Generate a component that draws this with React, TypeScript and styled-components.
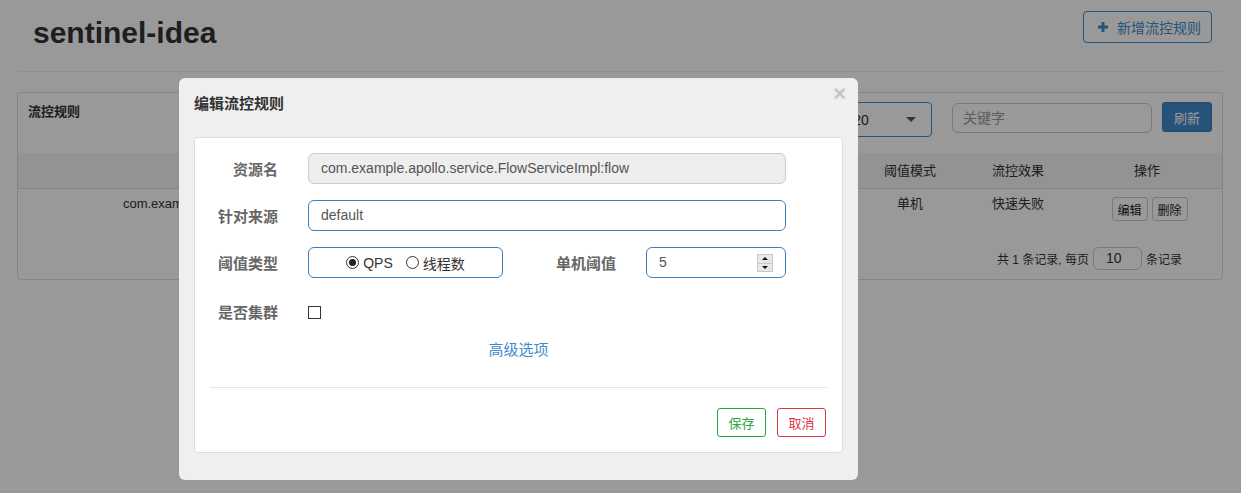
import styled, { createGlobalStyle } from "styled-components";

const GlobalStyle = createGlobalStyle`
  * {
    box-sizing: border-box;
  }
  html, body {
    margin: 0;
    padding: 0;
    background: #ffffff;
  }
  body {
    font-family: "Liberation Sans", "Noto Sans CJK SC", sans-serif;
    font-size: 14px;
    color: #333;
  }
`;

const blue = "#428bca";

const Page = styled.div`
  padding: 0 18px 0 17px;
  height: 493px;
`;

const Header = styled.div`
  display: flex;
  justify-content: space-between;
  align-items: flex-start;
  height: 71px;
  padding: 11px 11px 0 16px;
`;

const Title = styled.h1`
  margin: 5px 0 0;
  font-size: 30px;
  line-height: 34px;
  font-weight: bold;
  color: #333;
`;

const OutlineButton = styled.button`
  display: flex;
  align-items: center;
  gap: 9px;
  width: 129px;
  height: 32px;
  padding: 0 0 0 14px;
  border: 1px solid ${blue};
  border-radius: 4px;
  background: #fff;
  color: ${blue};
  font-family: inherit;
  font-size: 14px;
`;

const Divider = styled.div`
  height: 1px;
  background: #eee;
`;

const Panel = styled.div`
  margin-top: 20px;
  border: 1px solid #ddd;
  border-radius: 4px;
  background: #fff;
`;

const PanelHeading = styled.div`
  display: flex;
  justify-content: space-between;
  align-items: flex-start;
  height: 60px;
  padding: 9px 10px 0 10px;
`;

const PanelTitle = styled.div`
  font-size: 13px;
  line-height: 20px;
  font-weight: bold;
  color: #333;
`;

const Toolbar = styled.div`
  display: flex;
  align-items: flex-start;
`;

const MachineSelect = styled.div`
  display: flex;
  align-items: center;
  justify-content: space-between;
  width: 193px;
  height: 35px;
  padding: 0 15px 0 12px;
  border: 1px solid ${blue};
  border-radius: 4px;
  font-size: 14px;
  color: #333;
`;

const Caret = styled.span`
  width: 0;
  height: 0;
  border-left: 5px solid transparent;
  border-right: 5px solid transparent;
  border-top: 5px solid #555;
`;

const SearchInput = styled.div`
  width: 200px;
  height: 30px;
  margin: 1px 0 0 20px;
  padding: 0 10px;
  border: 1px solid #ccc;
  border-radius: 6px;
  font-size: 14px;
  line-height: 28px;
  color: #999;
`;

const PrimaryButton = styled.button`
  width: 50px;
  height: 30px;
  margin-left: 10px;
  border: 1px solid #357ebd;
  border-radius: 3px;
  background: ${blue};
  color: #fff;
  font-family: inherit;
  font-size: 13px;
`;

const columns = "496px 86px 86px 86px 84px 108px 108px 1fr";

const HeadRow = styled.div`
  display: grid;
  grid-template-columns: ${columns};
  height: 36px;
  background: #f5f5f5;
  border-bottom: 1px solid #ddd;
`;

const HeadCell = styled.div`
  text-align: center;
  font-size: 13px;
  line-height: 35px;
  color: #333;
`;

const BodyRow = styled.div`
  display: grid;
  grid-template-columns: ${columns};
  height: 42px;
  padding-top: 6px;
`;

const Cell = styled.div`
  text-align: center;
  font-size: 13px;
  line-height: 18px;
  color: #333;
  white-space: nowrap;
  overflow: hidden;
`;

const ActionCell = styled.div`
  display: flex;
  justify-content: center;
  gap: 4px;
  padding: 2px 0 0 5px;
`;

const SmallButton = styled.button`
  width: 36px;
  height: 24px;
  padding: 0;
  border: 1px solid #ccc;
  border-radius: 3px;
  background: #fff;
  color: #222;
  font-family: inherit;
  font-size: 12px;
`;

const Pager = styled.div`
  display: flex;
  justify-content: flex-end;
  align-items: center;
  gap: 4px;
  height: 23px;
  margin: 16px 0 9px;
  padding-right: 40px;
  font-size: 12px;
  color: #333;
`;

const PageSize = styled.div`
  width: 49px;
  height: 23px;
  padding-left: 12px;
  border: 1px solid #ccc;
  border-radius: 6px;
  font-size: 14px;
  line-height: 21px;
`;

const Backdrop = styled.div`
  position: fixed;
  inset: 0;
  background: rgba(0, 0, 0, 0.4);
`;

const Modal = styled.div`
  position: fixed;
  left: 179px;
  top: 78px;
  width: 679px;
  height: 402px;
  padding: 0 15px;
  background: #efefef;
  border-radius: 6px;
`;

const ModalHeader = styled.div`
  display: flex;
  justify-content: space-between;
  align-items: flex-start;
  height: 59px;
  padding-top: 16px;
`;

const ModalTitle = styled.div`
  font-size: 15px;
  line-height: 20px;
  font-weight: bold;
  color: #333;
`;

const Close = styled.span`
  margin: -11px -3px 0 0;
  font-family: "Liberation Sans", sans-serif;
  font-size: 22px;
  line-height: 22px;
  font-weight: bold;
  color: #c4c4c4;
`;

const Card = styled.div`
  height: 316px;
  padding: 15px 15px 0;
  background: #fff;
  border: 1px solid #ddd;
  border-radius: 4px;
`;

const FormRow = styled.div<{ $height?: number; $gap?: number }>`
  display: flex;
  align-items: center;
  height: ${(p) => p.$height ?? 31}px;
  margin-bottom: ${(p) => p.$gap ?? 16}px;
`;

const Label = styled.div<{ $width?: number }>`
  width: ${(p) => p.$width ?? 68}px;
  margin-right: 30px;
  text-align: right;
  font-size: 15px;
  font-weight: bold;
  color: #666;
`;

const TextField = styled.div<{ $disabled?: boolean; $width?: number }>`
  position: relative;
  width: ${(p) => p.$width ?? 478}px;
  height: 31px;
  padding-left: 12px;
  border: 1px solid ${(p) => (p.$disabled ? "#ccc" : "#3a7fc1")};
  border-radius: 6px;
  background: ${(p) => (p.$disabled ? "#eee" : "#fff")};
  font-size: 14px;
  line-height: 29px;
  color: #555;
`;

const RadioGroup = styled.div`
  display: flex;
  justify-content: center;
  align-items: center;
  gap: 13px;
  width: 195px;
  height: 31px;
  border: 1px solid #3a7fc1;
  border-radius: 6px;
  font-size: 14px;
  color: #333;
`;

const RadioOption = styled.span`
  display: flex;
  align-items: center;
  gap: 4px;
`;

const RadioDot = styled.span<{ $checked?: boolean }>`
  display: flex;
  justify-content: center;
  align-items: center;
  width: 13px;
  height: 13px;
  border: 1px solid #333;
  border-radius: 50%;

  &::after {
    content: "";
    display: ${(p) => (p.$checked ? "block" : "none")};
    width: 7px;
    height: 7px;
    border-radius: 50%;
    background: #222;
  }
`;

const Spinner = styled.div`
  position: absolute;
  right: 12px;
  top: 6px;
  display: flex;
  flex-direction: column;
  width: 16px;
  height: 18px;
  border: 1px solid #c8c8c8;
  background: #e8e8e8;
`;

const SpinHalf = styled.span<{ $up?: boolean }>`
  display: flex;
  flex: 1;
  justify-content: center;
  align-items: center;
  border-top: ${(p) => (p.$up ? "none" : "1px solid #c8c8c8")};

  &::after {
    content: "";
    border-left: 3px solid transparent;
    border-right: 3px solid transparent;
    ${(p) => (p.$up ? "border-bottom: 3px solid #111;" : "border-top: 3px solid #111;")}
  }
`;

const Checkbox = styled.span`
  width: 13px;
  height: 13px;
  margin-top: 2px;
  border: 1px solid #333;
  background: #fff;
`;

const AdvancedLink = styled.div`
  text-align: center;
  font-size: 15px;
  line-height: 20px;
  color: ${blue};
`;

const Rule = styled.div`
  height: 1px;
  margin-top: 27px;
  background: #e5e5e5;
`;

const Footer = styled.div`
  display: flex;
  justify-content: flex-end;
  gap: 11px;
  margin-top: 20px;
  padding-right: 1px;
`;

const FooterButton = styled.button<{ $tone: string }>`
  width: 49px;
  height: 29px;
  padding: 0;
  border: 1px solid ${(p) => p.$tone};
  border-radius: 3px;
  background: #fff;
  color: ${(p) => p.$tone};
  font-family: inherit;
  font-size: 13px;
`;

function PlusIcon() {
  return (
    <svg width="10" height="10" viewBox="0 0 10 10">
      <path d="M5 0v10M0 5h10" stroke={blue} strokeWidth="3" />
    </svg>
  );
}

export default function App() {
  return (
    <>
      <GlobalStyle />
      <Page>
        <Header>
          <Title>sentinel-idea</Title>
          <OutlineButton>
            <PlusIcon />
            新增流控规则
          </OutlineButton>
        </Header>
        <Divider />
        <Panel>
          <PanelHeading>
            <PanelTitle>流控规则</PanelTitle>
            <Toolbar>
              <MachineSelect>
                192.168.56.1:8720
                <Caret />
              </MachineSelect>
              <SearchInput>关键字</SearchInput>
              <PrimaryButton>刷新</PrimaryButton>
            </Toolbar>
          </PanelHeading>
          {/* the first columns sit under the dialog */}
          <HeadRow>
            <HeadCell />
            <HeadCell />
            <HeadCell />
            <HeadCell />
            <HeadCell />
            <HeadCell>阈值模式</HeadCell>
            <HeadCell>流控效果</HeadCell>
            <HeadCell>操作</HeadCell>
          </HeadRow>
          <BodyRow>
            <Cell>com.example.apollo.service.FlowServiceImpl:flow</Cell>
            <Cell />
            <Cell />
            <Cell />
            <Cell />
            <Cell>单机</Cell>
            <Cell>快速失败</Cell>
            <ActionCell>
              <SmallButton>编辑</SmallButton>
              <SmallButton>删除</SmallButton>
            </ActionCell>
          </BodyRow>
          <Pager>
            共 1 条记录, 每页
            <PageSize>10</PageSize>
            条记录
          </Pager>
        </Panel>
      </Page>

      <Backdrop />
      <Modal>
        <ModalHeader>
          <ModalTitle>编辑流控规则</ModalTitle>
          <Close>×</Close>
        </ModalHeader>
        <Card>
          <FormRow>
            <Label>资源名</Label>
            <TextField $disabled>com.example.apollo.service.FlowServiceImpl:flow</TextField>
          </FormRow>
          <FormRow>
            <Label>针对来源</Label>
            <TextField>default</TextField>
          </FormRow>
          <FormRow>
            <Label>阈值类型</Label>
            <RadioGroup>
              <RadioOption>
                <RadioDot $checked />
                QPS
              </RadioOption>
              <RadioOption>
                <RadioDot />
                线程数
              </RadioOption>
            </RadioGroup>
            <Label $width={113}>单机阈值</Label>
            <TextField $width={140}>
              5
              <Spinner>
                <SpinHalf $up />
                <SpinHalf />
              </Spinner>
            </TextField>
          </FormRow>
          <FormRow $height={35} $gap={11}>
            <Label>是否集群</Label>
            <Checkbox />
          </FormRow>
          <AdvancedLink>高级选项</AdvancedLink>
          <Rule />
          <Footer>
            <FooterButton $tone="#28a745">保存</FooterButton>
            <FooterButton $tone="#dc3545">取消</FooterButton>
          </Footer>
        </Card>
      </Modal>
    </>
  );
}
